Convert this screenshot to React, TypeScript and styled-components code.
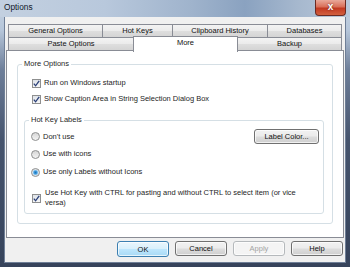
import styled, { createGlobalStyle } from "styled-components";

const GlobalStyle = createGlobalStyle`
  html, body {
    margin: 0;
    padding: 0;
    background: #3c4a63;
  }
  * {
    box-sizing: border-box;
  }
`;

const Window = styled.div`
  width: 350px;
  height: 267px;
  padding: 0 4px 4px 4px;
  display: flex;
  flex-direction: column;
  font-family: "Liberation Sans", Arial, sans-serif;
  font-size: 7.5px;
  color: #1e1e1e;
  background: linear-gradient(
    180deg,
    #c6d3e2 0px,
    #b6c6da 30px,
    #6d7e99 70px,
    #46546d 140px,
    #36435b 100%
  );
`;

const TitleBar = styled.div`
  height: 17px;
  display: flex;
  align-items: flex-start;
  margin: 0 -4px;
  padding-left: 4px;
  background: linear-gradient(
    90deg,
    #c3d0e0 0%,
    #b8c8dc 30%,
    #9fb3cc 55%,
    #8aa2c0 70%,
    #a6b8ce 85%,
    #b9c8da 100%
  );
`;

const Title = styled.span`
  font-size: 8.3px;
  line-height: 15px;
  color: #101828;
`;

const CloseButton = styled.div`
  margin-left: auto;
  margin-right: 4px;
  width: 31px;
  height: 16px;
  border: 1px solid #6b2a22;
  border-top: none;
  border-radius: 0 0 4px 4px;
  background: linear-gradient(180deg, #e9a99a 0%, #d9705a 45%, #c23a22 55%, #d2603f 100%);
  color: #ffffff;
  font-weight: bold;
  font-size: 10px;
  line-height: 14px;
  text-align: center;
  text-shadow: 0 0 2px #5a1a10;
`;

const Client = styled.div`
  flex: 1;
  display: flex;
  flex-direction: column;
  background: #f0f0f0;
  border: 1px solid #6f7f97;
  border-top: none;
  padding: 7px 1px 5px 1px;
`;

const TabRow = styled.div<{ $first?: boolean }>`
  display: flex;
  height: 14px;
  margin: ${(p) => (p.$first ? "0" : "-1px")} 2px 0 2px;
  position: relative;
  z-index: 2;
`;

const Tab = styled.div<{ $w: number; $active?: boolean }>`
  width: ${(p) => p.$w}px;
  flex: none;
  height: ${(p) => (p.$active ? "16px" : "14px")};
  margin-top: ${(p) => (p.$active ? "-1px" : "0")};
  margin-left: -1px;
  &:first-child {
    margin-left: 0;
  }
  border: 1px solid #898c95;
  border-bottom: ${(p) => (p.$active ? "none" : "1px solid #898c95")};
  background: ${(p) =>
    p.$active
      ? "#ffffff"
      : "linear-gradient(180deg, #f3f3f3 0%, #ebebeb 48%, #dedede 52%, #d4d4d4 100%)"};
  position: relative;
  z-index: ${(p) => (p.$active ? 3 : 1)};
  text-align: center;
  line-height: 12px;
  white-space: nowrap;
  color: #111;
`;

const Panel = styled.div`
  height: 188px;
  margin-top: -1px;
  background: #ffffff;
  border: 1px solid #898c95;
  display: flex;
  flex-direction: column;
  position: relative;
  z-index: 1;
`;

const GroupBox = styled.div<{ $m: string }>`
  position: relative;
  flex: 1;
  display: flex;
  flex-direction: column;
  margin: ${(p) => p.$m};
  border: 1px solid #d5dfe5;
  border-radius: 3px;
`;

const GroupTitle = styled.span`
  position: absolute;
  top: -6px;
  left: 4px;
  padding: 0 2px;
  background: #ffffff;
  line-height: 10px;
`;

const OptionRow = styled.div<{ $mt: number; $pl: number; $h?: number }>`
  display: flex;
  align-items: center;
  margin-top: ${(p) => p.$mt}px;
  padding-left: ${(p) => p.$pl}px;
  min-height: ${(p) => p.$h ?? 12}px;
  line-height: 12px;
`;

const Box = styled.span<{ $gap?: number }>`
  width: 9px;
  height: 9px;
  flex: none;
  border: 1px solid #8e8f8f;
  background: linear-gradient(180deg, #dfe3e8 0%, #f6f6f6 100%);
  display: flex;
  align-items: center;
  justify-content: center;
  margin-right: ${(p) => p.$gap ?? 3}px;
  svg {
    display: block;
  }
`;

const Radio = styled.span<{ $on?: boolean }>`
  width: 9px;
  height: 9px;
  flex: none;
  border: 1px solid #8e8f8f;
  border-radius: 50%;
  background: ${(p) =>
    p.$on
      ? "radial-gradient(circle at 50% 50%, #1f73b3 0, #3d9be0 1.5px, #a6d2f0 2.5px, #e8e8e8 3.2px)"
      : "linear-gradient(180deg, #d6d6d6 0%, #f4f4f4 100%)"};
  margin-right: 3px;
`;

const WrapText = styled.span`
  width: 265px;
  line-height: 10px;
`;

const PushButton = styled.button<{ $w: number; $default?: boolean }>`
  width: ${(p) => p.$w}px;
  height: ${(p) => (p.$default ? 16 : 15)}px;
  padding: 0;
  font-family: "Liberation Sans", Arial, sans-serif;
  font-size: 7.5px;
  color: ${(p) => (p.disabled ? "#a3a3a3" : "#111")};
  border: 1px solid
    ${(p) => (p.disabled ? "#b5b9bc" : p.$default ? "#3c7fb1" : "#707070")};
  border-radius: 3px;
  background: ${(p) =>
    p.disabled
      ? "#f4f4f4"
      : p.$default
      ? "linear-gradient(180deg, #eaf6fd 0%, #d9f0fc 48%, #bee6fd 52%, #a7d9f5 100%)"
      : "linear-gradient(180deg, #f2f2f2 0%, #ebebeb 48%, #dddddd 52%, #cfcfcf 100%)"};
  box-shadow: inset 0 0 0 1px rgba(255, 255, 255, 0.7);
  flex: none;
`;

const ColorButton = styled(PushButton)`
  margin-left: auto;
  margin-right: 4px;
`;

const ButtonBar = styled.div`
  display: flex;
  justify-content: flex-end;
  gap: 6px;
  margin-top: 3px;
  padding-right: 1px;
  height: 16px;
  align-items: flex-start;
`;

const Check = () => (
  <svg width="7" height="7" viewBox="0 0 7 7">
    <path
      d="M0.8 3.6 L2.6 5.8 L6.2 0.8"
      fill="none"
      stroke="#2a3f78"
      strokeWidth="1.3"
    />
  </svg>
);

function App() {
  return (
    <>
      <GlobalStyle />
      <Window>
        <TitleBar>
          <Title>Options</Title>
          <CloseButton>x</CloseButton>
        </TitleBar>
        <Client>
          <TabRow $first>
            <Tab $w={95}>General Options</Tab>
            <Tab $w={71}>Hot Keys</Tab>
            <Tab $w={96}>Clipboard History</Tab>
            <Tab $w={75}>Databases</Tab>
          </TabRow>
          <TabRow>
            <Tab $w={126}>Paste Options</Tab>
            <Tab $w={105} $active>
              More
            </Tab>
            <Tab $w={105}>Backup</Tab>
          </TabRow>
          <Panel>
            <GroupBox $m="13px 10px">
              <GroupTitle>More Options</GroupTitle>
              <OptionRow $mt={12} $pl={14}>
                <Box>
                  <Check />
                </Box>
                Run on Windows startup
              </OptionRow>
              <OptionRow $mt={4} $pl={14}>
                <Box>
                  <Check />
                </Box>
                Show Caption Area in String Selection Dialog Box
              </OptionRow>
              <GroupBox $m="15px 8px 9px 6px">
                <GroupTitle>Hot Key Labels</GroupTitle>
                <OptionRow $mt={8} $pl={6} $h={14}>
                  <Radio />
                  Don't use
                  <ColorButton $w={65}>Label Color...</ColorButton>
                </OptionRow>
                <OptionRow $mt={4} $pl={6}>
                  <Radio />
                  Use with icons
                </OptionRow>
                <OptionRow $mt={6} $pl={6}>
                  <Radio $on />
                  Use only Labels without Icons
                </OptionRow>
                <OptionRow $mt={10} $pl={7}>
                  <Box $gap={4}>
                    <Check />
                  </Box>
                  <WrapText>
                    Use Hot Key with CTRL for pasting and without CTRL to select item (or
                    vice versa)
                  </WrapText>
                </OptionRow>
              </GroupBox>
            </GroupBox>
          </Panel>
          <ButtonBar>
            <PushButton $w={52} $default>
              OK
            </PushButton>
            <PushButton $w={52}>Cancel</PushButton>
            <PushButton $w={52} disabled>
              Apply
            </PushButton>
            <PushButton $w={52}>Help</PushButton>
          </ButtonBar>
        </Client>
      </Window>
    </>
  );
}

export default App;
